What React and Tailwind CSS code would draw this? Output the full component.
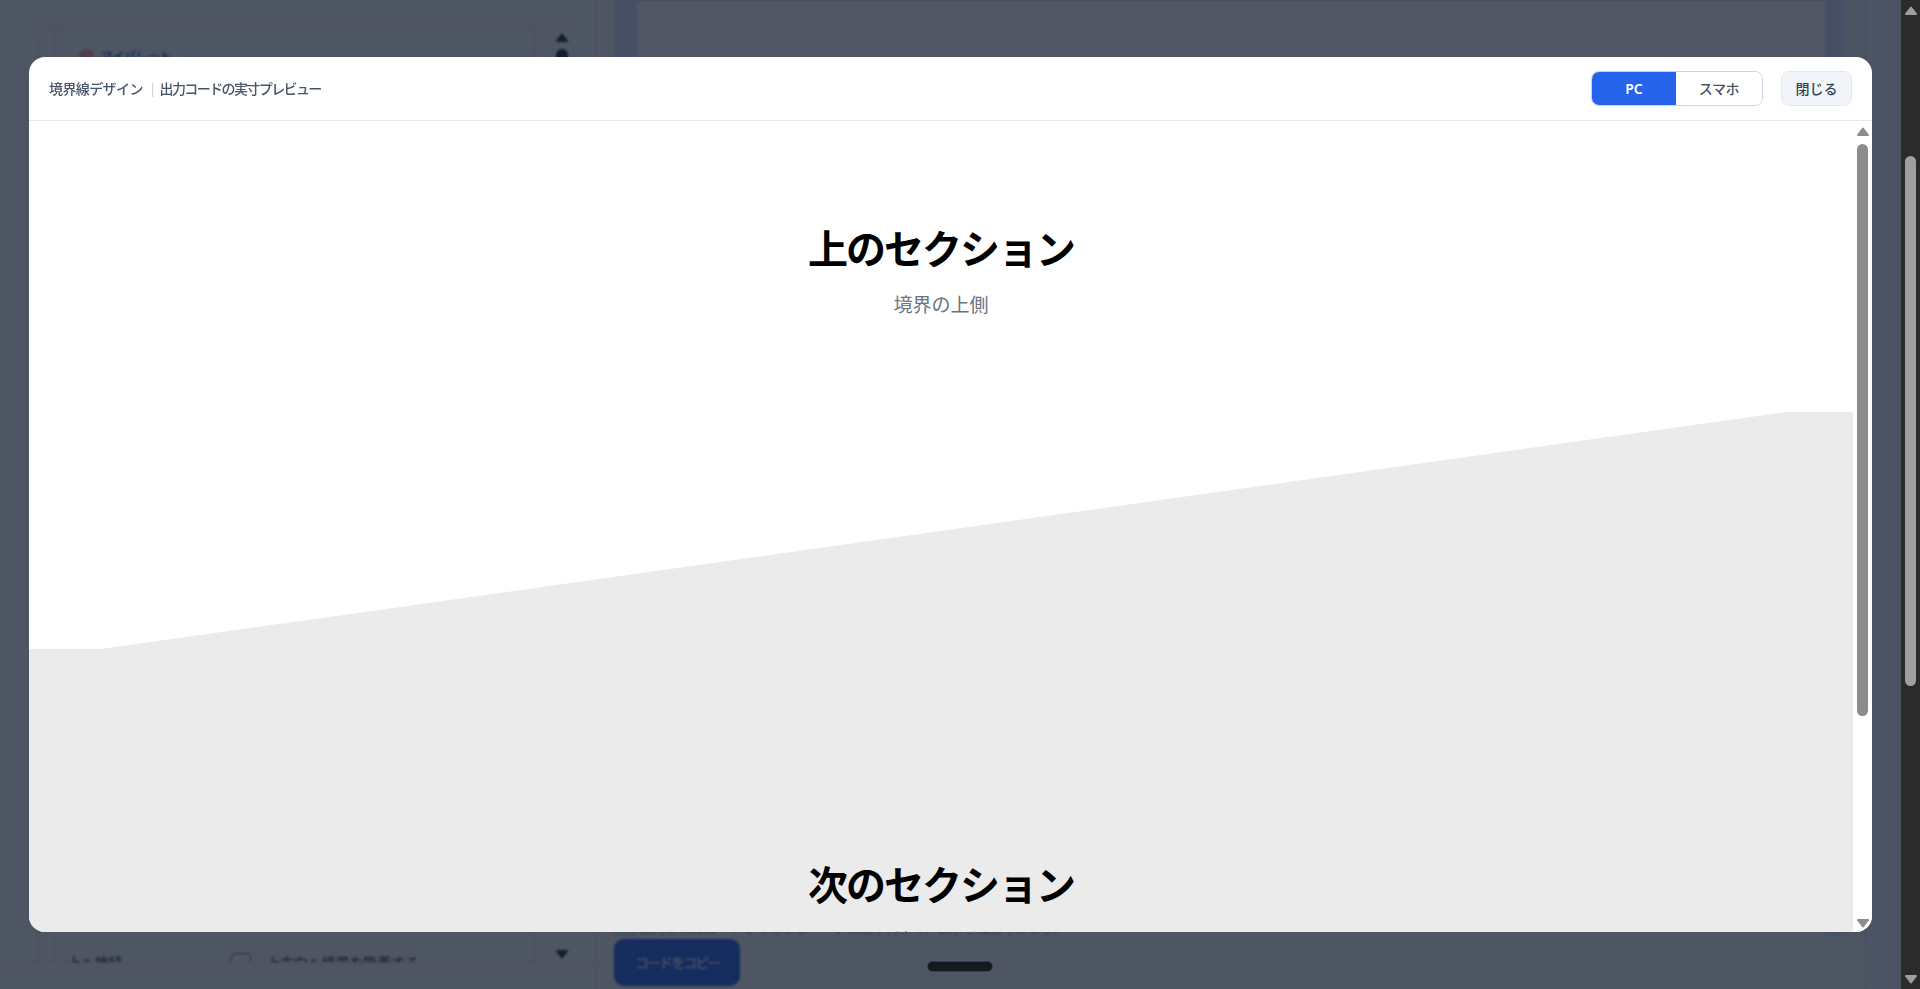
const Arrow = ({ down, className }) => (
  <svg viewBox="0 0 14 10" className={className}>
    <polygon
      points={down ? "2,2 12,2 7,8.5" : "2,8 12,8 7,1.5"}
      fill="currentColor"
      stroke="currentColor"
      strokeWidth="2"
      strokeLinejoin="round"
    />
  </svg>
);

// page behind the dialog, only the edges of it can be seen
const SidePanel = () => (
  <aside className="w-[597px] shrink-0 border-r border-[#e2e8f0]">
    <div className="h-[963px] overflow-hidden border-b border-[#e2e8f0] pl-[37px] pt-[26px]">
      <div className="flex h-[1000px] w-[538px] rounded-tl-2xl border-l border-t border-[#e2e8f0]">
        <div className="ml-[17px] flex h-[937px] w-[480px] flex-col justify-between border-l border-r border-[#e2e8f0]">
          <div className="flex items-center gap-1.5 pl-[23px] pt-[19px]">
            <span className="h-[15px] w-[15px] rounded-full bg-[#fda4af]" />
            <span className="text-[13px] font-medium leading-5 tracking-[-1.2px] text-[#1d4ed8]">マイパレット</span>
            <span className="ml-2 h-px flex-1 bg-[#e2e8f0]" />
          </div>
          <div className="mb-[-9px] flex items-center pl-[11px] text-sm leading-5 tracking-[-0.1px] text-[#1e293b]">
            <span className="w-[164px]">上へ接続</span>
            <span className="mr-[15px] h-5 w-5 rounded border border-[#64748b] bg-white" />
            <span>上方向へ境界を吸着する</span>
          </div>
        </div>
        <div className="ml-[16px] flex h-[937px] w-[22px] flex-col items-center justify-between pb-[5px] pt-[6px] text-[#1e293b]">
          <div className="flex w-full flex-col items-center gap-[6px]">
            <Arrow className="h-[10px] w-[14px]" />
            <span className="h-[40px] w-[12px] rounded-full bg-[#1e293b]" />
          </div>
          <Arrow down className="h-[10px] w-[14px]" />
        </div>
      </div>
    </div>
  </aside>
);

const MainPanel = () => (
  <main className="flex min-w-0 flex-1 flex-col">
    <div className="flex h-[936px] overflow-hidden pl-[17px]">
      <div className="w-[23px] bg-[#dbeafe]" />
      <div className="flex flex-1 flex-col justify-end border-t border-[#cbd5e1] bg-white pb-[1px] pl-[2px]">
        <p className="text-[13px] leading-[14px] text-[#94a3b8]">出力されたコードをそのままページに貼り付けて、表示を確認できます。</p>
      </div>
      <div className="w-[21px] bg-[#dbeafe]" />
      <div className="w-[19px] bg-[#f1f5f9]" />
    </div>
    <div className="pl-[17px] pt-[3px]">
      <button className="flex h-[47px] w-[126px] items-center justify-center rounded-[10px] bg-[#2563eb] text-sm font-medium tracking-[-1.9px] text-white/85">
        コードをコピー
      </button>
    </div>
  </main>
);

const Preview = () => (
  <div className="flex min-h-0 flex-1">
    <div className="min-w-0 flex-1 overflow-hidden">
      <section className="bg-white pb-[92px] pt-[98px] text-center">
        <h2 className="text-[40px] font-semibold leading-[60px] tracking-[-2px] text-black">上のセクション</h2>
        <p className="mt-[12px] text-[19px] leading-[29px] text-[#6b7280]">境界の上側</p>
      </section>
      <svg viewBox="0 0 1824 237" preserveAspectRatio="none" className="block h-[237px] w-full bg-white">
        <polygon points="0,237 72,237 1757,0 1824,0 1824,237" fill="#ebebeb" />
      </svg>
      <section className="bg-[#ebebeb] pt-[206px] text-center">
        <h2 className="text-[40px] font-semibold leading-[60px] tracking-[-2px] text-black">次のセクション</h2>
        <p className="mt-[12px] text-[19px] leading-[29px] text-[#6b7280]">境界の下側</p>
      </section>
    </div>
    <div className="flex w-[19px] shrink-0 flex-col items-center bg-white pb-[4px] pt-[6px] text-[#8c8c8c]">
      <Arrow className="h-[10px] w-[14px]" />
      <div className="mt-[7px] h-[572px] w-[11px] rounded-full bg-[#8c8c8c]" />
      <Arrow down className="mt-auto h-[10px] w-[14px]" />
    </div>
  </div>
);

const Dialog = () => (
  <div className="flex h-[875px] w-[1843px] flex-col overflow-hidden rounded-2xl bg-white">
    <header className="flex h-[64px] shrink-0 items-center justify-between border-b border-[#e2e8f0] px-5">
      <div className="flex items-center text-sm font-medium text-[#475569]">
        <span className="tracking-[-0.6px]">境界線デザイン</span>
        <span className="ml-[6px] mr-[3px] text-[#cbd5e1]">|</span>
        <span className="tracking-[-1.6px]">出力コードの実寸プレビュー</span>
      </div>
      <div className="flex items-center gap-[18px]">
        <div className="flex h-[35px] w-[172px] overflow-hidden rounded-lg border border-[#cbd5e1] text-sm">
          <button className="w-[84px] bg-[#2563eb] font-semibold text-white">PC</button>
          <button className="flex-1 bg-white font-medium tracking-[-0.4px] text-[#475569]">スマホ</button>
        </div>
        <button className="h-[35px] w-[71px] rounded-lg border border-[#e2e8f0] bg-[#f1f5f9] text-sm font-medium text-[#334155]">
          閉じる
        </button>
      </div>
    </header>
    <Preview />
  </div>
);

const App = () => {
  return (
    <div className="flex h-[989px] w-[1920px] overflow-hidden bg-[#2b2b2b] font-['Noto_Sans','Noto_Sans_CJK_JP',sans-serif]">
      <div className="relative flex min-w-0 flex-1 bg-[#f8fafc]">
        <SidePanel />
        <MainPanel />
        <div className="w-[36px] shrink-0 border-l border-[#cbd5e1] bg-[#f1f5f9]" />

        <div className="absolute inset-0 flex items-center justify-center bg-[#0f172a]/[0.73] backdrop-blur-[1px]">
          <Dialog />
        </div>
        <span className="absolute bottom-[17px] left-[927px] h-[11px] w-[66px] rounded-full border border-[#3b3f47] bg-[#16191f]" />
      </div>

      {/* browser scrollbar */}
      <div className="flex w-[19px] shrink-0 flex-col items-center pb-[5px] pt-[6px] text-[#9f9f9f]">
        <Arrow className="h-[10px] w-[14px]" />
        <div className="mt-[140px] h-[530px] w-[11px] rounded-full bg-[#9f9f9f]" />
        <Arrow down className="mt-auto h-[10px] w-[14px]" />
      </div>
    </div>
  );
};

export default App;
